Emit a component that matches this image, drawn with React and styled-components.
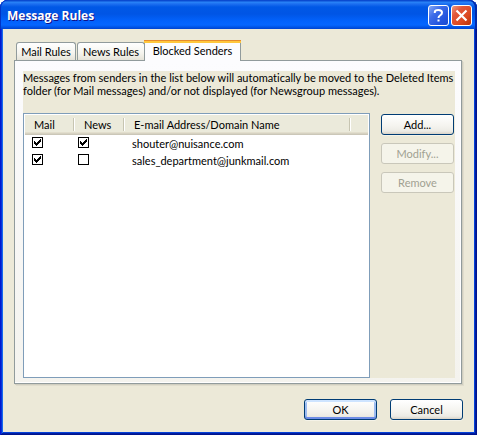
import React, { useState } from "react";
import styled, { createGlobalStyle, css } from "styled-components";

const GlobalStyle = createGlobalStyle`
  *, *::before, *::after { box-sizing: border-box; }
  body {
    margin: 0;
    background: #fff;
    color: #000;
    font: 11px/13px Lato, "Liberation Sans", Arial, sans-serif;
    font-variant-ligatures: none;
  }
  button, input { font: inherit; }
`;

const Dialog = styled.main`
  min-height: 100vh;
  display: flex;
  flex-direction: column;
  background: #0831d9;
  border-radius: 8px 8px 0 0;
  box-shadow: inset 1px 0 #0019cf, inset -1px -1px #00138c, inset 2px 0 #0831d9,
    inset -2px -2px #001ea0, inset 3px 0 #166aee, inset -3px -3px #0441d8;
  padding: 0 3px 3px;
`;

const TitleBar = styled.header`
  height: 29px;
  margin: 0 -3px;
  padding: 2px 5px 0 7px;
  display: flex;
  align-items: center;
  gap: 2px;
  border-radius: 8px 8px 0 0;
  background: linear-gradient(
    #0a4ad0 0, #0a4ad0 1px, #2a86f8 2px, #1c6ef0 4px, #0058e6 7px,
    #0055e5 14px, #0262fc 21px, #0566ff 25px, #0055e8 27px, #0043cf 29px
  );
  box-shadow: inset 1px 0 #0233c4, inset -2px 0 #0229a8;
`;

const Title = styled.h1`
  flex: 1;
  margin: 0;
  color: #fff;
  font: bold 12px/18px "Open Sans", "Noto Sans", sans-serif;
  text-shadow: 1px 1px #0f1089;
`;

const CaptionButton = styled.button`
  width: 21px;
  height: 21px;
  padding: 0;
  display: grid;
  place-items: center;
  border: 1px solid #fff;
  border-radius: 3px;
  background: ${({ $close }) =>
    $close
      ? "linear-gradient(135deg, #ee9a80 0, #e2573a 30%, #dc4a22 65%, #b93208 100%)"
      : "linear-gradient(135deg, #86a8f5 0, #3e6ce8 35%, #2456df 70%, #1a4bd0 100%)"};
`;

const Body = styled.div`
  flex: 1;
  display: flex;
  flex-direction: column;
  padding: 11px 12px 12px 11px;
  background: #ece9d8;
`;

const TabList = styled.div`
  display: flex;
  align-items: flex-end;
  height: 21px;
  margin-bottom: -1px;
  padding-left: 2px;
  z-index: 1;
`;

const Tab = styled.button`
  height: 18px;
  margin: 0 1px 1px 0;
  padding: 0;
  width: ${({ $width }) => $width}px;
  border: 1px solid #919b9c;
  border-bottom: 0;
  border-radius: 3px 3px 0 0;
  background: linear-gradient(#fff, #f5f4ee 60%, #e5e3d8);
  color: #000;
  text-align: center;
  white-space: nowrap;
  ${({ $selected }) =>
    $selected &&
    css`
      height: 21px;
      margin: 0 0 0 -2px;
      padding: 0 0 4px;
      border-top: 3px solid #ffc73c;
      background: #fcfcfe;
      border-image: linear-gradient(#e68b2c 1px, #ffc73c 1px, #ffc73c 3px, #919b9c 3px) 3 1 0 1;
    `}
`;

const Panel = styled.section`
  flex: 1;
  display: flex;
  padding: 10px 6px 5px 8px;
  border: 1px solid #919b9c;
  background: linear-gradient(#fcfcfe, #f4f3ee);
  box-shadow: inset -1px -1px #fff, 1px 1px #d0cec0, 2px 2px #e0ddcd;
`;

const Page = styled.div`
  flex: 1;
  display: flex;
  flex-direction: column;
  background: #ece9d8;
`;

const Message = styled.p`
  margin: 0;
  height: 42px;
`;

const Columns = styled.div`
  flex: 1;
  display: flex;
  gap: 11px;
`;

const ListFrame = styled.div`
  flex: 1;
  border: 1px solid #7f9db9;
  background: #fff;
  padding: 0 1px;
`;

const Table = styled.table`
  width: 100%;
  table-layout: fixed;
  border-collapse: collapse;
`;

const Column = styled.col`
  width: ${({ $width }) => ($width ? $width + "px" : "auto")};
`;

const HeadRow = styled.tr`
  height: 21px;
  background: linear-gradient(
    #fff 1px, #ebeadb 1px, #ebeadb 18px, #e2decd 18px, #e2decd 19px,
    #d6d2c2 19px, #d6d2c2 20px, #cbc7b8 20px
  );
`;

const HeadCell = styled.th`
  padding: 0 0 0 9px;
  font-weight: normal;
  text-align: left;
  white-space: nowrap;
  background: linear-gradient(90deg, #c7c5b2 1px, #fff 1px) right 4px / 2px 13px no-repeat;
`;

const HeadFiller = styled.td`
  padding: 0;
`;

const Row = styled.tr`
  height: 17px;
`;

const CheckCell = styled.td`
  padding: 2px 0 0 ${({ $inset }) => $inset}px;
  vertical-align: top;
`;

const AddressCell = styled.td`
  padding: 0 0 0 7px;
  white-space: nowrap;
`;

const CheckBox = styled.input`
  appearance: none;
  display: block;
  width: 11px;
  height: 11px;
  margin: 0;
  border: 1px solid #000;
  background: #fff;
  &:checked {
    background-image: url("data:image/svg+xml,%3Csvg xmlns='http://www.w3.org/2000/svg' viewBox='0 0 9 9' shape-rendering='crispEdges'%3E%3Cpath d='M1 3h1v1h1v1h1v-1h1v-1h1v-1h1v-1h1v3h-1v1h-1v1h-1v1h-1v1h-1v-1h-1v-1h-1z'/%3E%3C/svg%3E");
  }
`;

const SideButtons = styled.div`
  width: 74px;
  padding: 1px 1px 0 0;
  display: flex;
  flex-direction: column;
  gap: 8px;
`;

const PushButton = styled.button`
  width: 73px;
  height: 21px;
  padding: 0 0 1px;
  border: 1px solid #003c74;
  border-radius: 3px;
  background: linear-gradient(#fff, #f4f3ee 60%, #ecebe5 85%, #d9d3c8);
  color: #000;
  box-shadow: 0 1px #f5f3e8;
  ${({ $default }) =>
    $default &&
    css`
      box-shadow: inset 0 2px #cee4ff, inset 0 -2px #6d8ce6, inset 2px 0 #9dbcf0,
        inset -2px 0 #9dbcf0, 0 1px #f5f3e8;
    `}
  &:disabled {
    border-color: #c9c7ba;
    background: #f5f4ea;
    color: #a1a192;
    box-shadow: none;
  }
`;

const Footer = styled.footer`
  display: flex;
  justify-content: flex-end;
  gap: 13px;
  padding-top: 15px;
  margin-right: -1px;
`;

const TABS = [
  { name: "Mail Rules", width: 60 },
  { name: "News Rules", width: 68 },
  { name: "Blocked Senders", width: 97 },
];

const SENDERS = [
  { address: "shouter@nuisance.com", mail: true, news: true },
  { address: "sales_department@junkmail.com", mail: true, news: false },
];

export default function App() {
  const [tab, setTab] = useState("Blocked Senders");
  return (
    <>
      <GlobalStyle />
      <Dialog aria-labelledby="dialog-title">
        <TitleBar>
          <Title id="dialog-title">Message Rules</Title>
          <CaptionButton aria-label="Help">
            <svg width="19" height="19" viewBox="0 0 19 19" fill="none" stroke="#fff" strokeWidth="2">
              <path d="M5.8 7V6Q5.8 4 9.3 4Q13 4 13 6.7Q13 8.2 11 9.5Q9.5 10.5 9.5 12" />
              <path d="M9.5 13.5v2" />
            </svg>
          </CaptionButton>
          <CaptionButton $close aria-label="Close">
            <svg width="19" height="19" viewBox="0 0 19 19" fill="none" stroke="#fff" strokeWidth="2.2">
              <path d="M4.5 4.5l10 10M14.5 4.5l-10 10" />
            </svg>
          </CaptionButton>
        </TitleBar>
        <Body>
          <TabList role="tablist">
            {TABS.map(({ name, width }) => (
              <Tab
                key={name}
                role="tab"
                aria-selected={tab === name}
                $selected={tab === name}
                $width={width}
                onClick={() => setTab(name)}
              >
                {name}
              </Tab>
            ))}
          </TabList>
          <Panel role="tabpanel" aria-label={tab}>
            <Page>
              <Message>
                Messages from senders in the list below will automatically be moved to the Deleted Items
                folder (for Mail messages) and/or not displayed (for Newsgroup messages).
              </Message>
              <Columns>
                <ListFrame>
                  <Table>
                    <colgroup>
                      <Column $width={50} />
                      <Column $width={50} />
                      <Column />
                      <Column $width={17} />
                    </colgroup>
                    <thead>
                      <HeadRow>
                        <HeadCell scope="col">Mail</HeadCell>
                        <HeadCell scope="col">News</HeadCell>
                        <HeadCell scope="col">E-mail Address/Domain Name</HeadCell>
                        <HeadFiller />
                      </HeadRow>
                    </thead>
                    <tbody>
                      {SENDERS.map(({ address, mail, news }) => (
                        <Row key={address}>
                          <CheckCell $inset={7}>
                            <CheckBox type="checkbox" defaultChecked={mail} aria-label={"Mail: " + address} />
                          </CheckCell>
                          <CheckCell $inset={3}>
                            <CheckBox type="checkbox" defaultChecked={news} aria-label={"News: " + address} />
                          </CheckCell>
                          <AddressCell colSpan={2}>{address}</AddressCell>
                        </Row>
                      ))}
                    </tbody>
                  </Table>
                </ListFrame>
                <SideButtons>
                  <PushButton>Add...</PushButton>
                  <PushButton disabled>Modify...</PushButton>
                  <PushButton disabled>Remove</PushButton>
                </SideButtons>
              </Columns>
            </Page>
          </Panel>
          <Footer>
            <PushButton $default>OK</PushButton>
            <PushButton>Cancel</PushButton>
          </Footer>
        </Body>
      </Dialog>
    </>
  );
}
